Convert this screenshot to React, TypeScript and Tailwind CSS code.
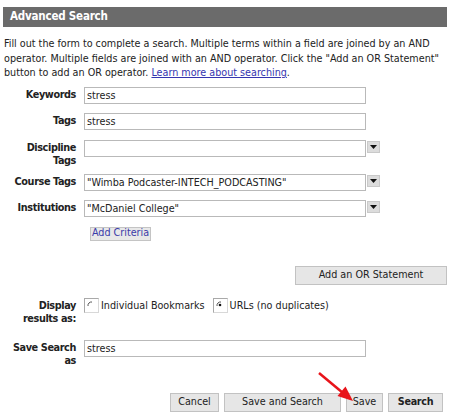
import React from 'react';

type RowProps = {
    label: React.ReactNode;
    className?: string;
    children: React.ReactNode;
};

function Row({ label, className = '', children }: RowProps) {
    return (
        <div className={`flex items-start ${className}`}>
            <div className="w-[76px] shrink-0 text-right font-bold text-[10.8px] tracking-[-0.4px] leading-[13.5px] pt-[1px]">
                {label}
            </div>
            <div className="ml-[8px] flex items-start">{children}</div>
        </div>
    );
}

function TextBox({ value }: { value: string }) {
    return (
        <div className="w-[282px] h-[17px] border border-[#b9b9b9] bg-white px-[2px] leading-[15px] whitespace-nowrap overflow-hidden">
            {value}
        </div>
    );
}

function DropArrow() {
    return (
        <div className="ml-[1px] mt-[1px] w-[13px] h-[12px] bg-[#dcdcdc] border border-[#c9c9c9] flex items-center justify-center">
            <svg width="7" height="4" viewBox="0 0 7 4">
                <polygon points="0,0 7,0 3.5,4" fill="#111" />
            </svg>
        </div>
    );
}

function Radio({ checked }: { checked?: boolean }) {
    return (
        <div className="w-[15px] h-[15px] border border-[#a9a9a9] border-r-[#d8d8d8] border-b-[#d8d8d8] bg-white shrink-0">
            <svg width="13" height="13" viewBox="0 0 13 13">
                <path d="M3 7 A3.5 3.5 0 0 1 7 3" stroke="#555" strokeWidth="1" fill="none" />
                {checked && <circle cx="6" cy="6" r="1.3" fill="#111" />}
            </svg>
        </div>
    );
}

function Btn({ w, bold, children }: { w: string; bold?: boolean; children: React.ReactNode }) {
    return (
        <div
            className={`${w} h-[19px] bg-[#e6e6e6] border border-[#c2c2c2] flex items-center justify-center text-[#222] ${
                bold ? 'font-bold tracking-[-0.3px]' : ''
            }`}
        >
            {children}
        </div>
    );
}

export default function App() {
    return (
        <div className="relative w-[451px] h-[415px] overflow-hidden bg-white font-['DejaVu_Sans_Condensed','Liberation_Sans',sans-serif] text-[10.7px] text-[#222]">
            {/* Header */}
            <div className="ml-[3px] mt-[7px] w-[444px] h-[20px] bg-[#6b6b6b] flex items-center pl-[7px]">
                <span className="text-white font-bold text-[11.5px] tracking-[-0.2px]">Advanced Search</span>
            </div>

            {/* Intro */}
            <p className="mt-[10px] ml-[4px] leading-[14.5px] whitespace-nowrap">
                Fill out the form to complete a search. Multiple terms within a field are joined by an AND
                <br />
                operator. Multiple fields are joined with an AND operator. Click the "Add an OR Statement"
                <br />
                button to add an OR operator.{' '}
                <span className="text-[#3535b0] underline">Learn more about searching</span>.
            </p>

            {/* Fields */}
            <Row label="Keywords" className="mt-[6px]">
                <TextBox value="stress" />
            </Row>
            <Row label="Tags" className="mt-[9px]">
                <TextBox value="stress" />
            </Row>
            <Row label={<>Discipline<br />Tags</>} className="mt-[10px]">
                <TextBox value="" />
                <DropArrow />
            </Row>
            <Row label="Course Tags" className="mt-[6px]">
                <TextBox value={'"Wimba Podcaster-INTECH_PODCASTING"'} />
                <DropArrow />
            </Row>
            <Row label="Institutions" className="mt-[9px]">
                <TextBox value={'"McDaniel College"'} />
                <DropArrow />
            </Row>

            <div className="mt-[10px] ml-[90px] w-[61px] h-[14px] bg-[#e8e8e8] border border-[#c4c4c4] flex items-center justify-center text-[#3b3ba8] leading-none">
                Add Criteria
            </div>

            <div className="mt-[25px] ml-[295px] w-[152px] h-[19px] bg-[#e6e6e6] border border-[#c2c2c2] flex items-center justify-center">
                Add an OR Statement
            </div>

            {/* Display results */}
            <Row label={<>Display<br />results as:</>} className="mt-[13px]">
                <div className="flex items-center">
                    <Radio />
                    <span className="ml-[2px]">Individual Bookmarks</span>
                    <div className="ml-[8px]">
                        <Radio checked />
                    </div>
                    <span className="ml-[2px]">URLs (no duplicates)</span>
                </div>
            </Row>

            <Row label={<>Save Search<br />as</>} className="mt-[14px]">
                <TextBox value="stress" />
            </Row>

            {/* Actions */}
            <div className="mt-[25px] flex justify-end gap-[5px] pr-[8px]">
                <Btn w="w-[49px]">Cancel</Btn>
                <Btn w="w-[117px]">Save and Search</Btn>
                <Btn w="w-[37px]">Save</Btn>
                <Btn w="w-[55px]" bold>Search</Btn>
            </div>

            {/* Red annotation arrow */}
            <svg className="absolute left-0 top-0 pointer-events-none" width="451" height="415">
                <line x1="319" y1="373" x2="343" y2="393" stroke="#e8141a" strokeWidth="2.5" />
                <polygon points="353,401 337.5,396 345.5,386.5" fill="#e8141a" />
            </svg>
        </div>
    );
}
